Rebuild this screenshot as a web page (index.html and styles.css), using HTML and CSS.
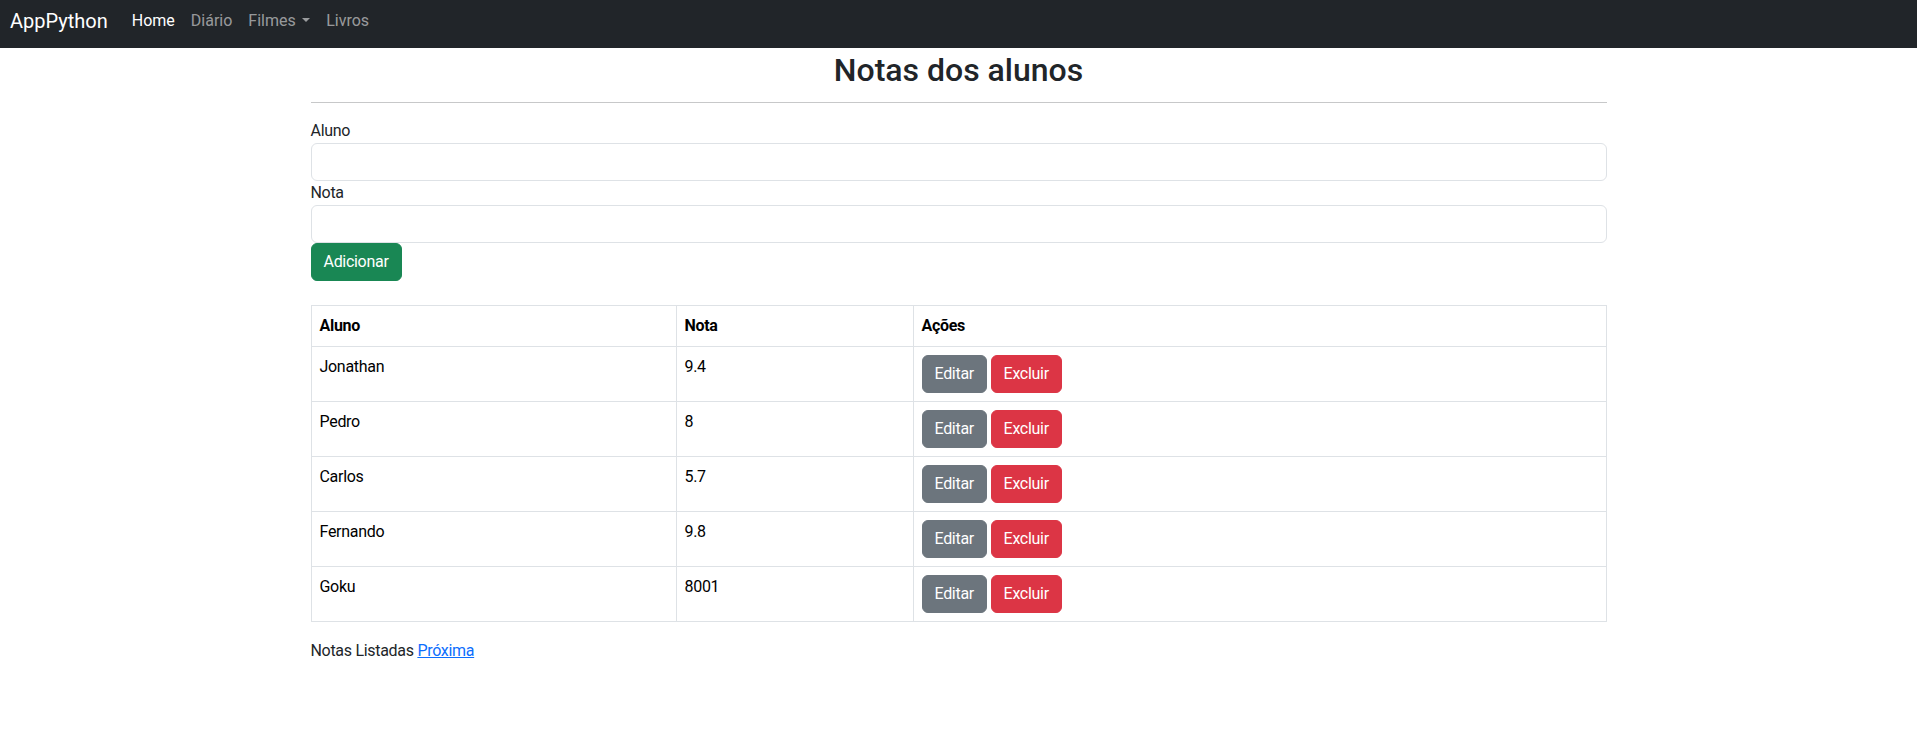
FILE: index.html
```html
<!DOCTYPE html>
<html lang="pt-BR">
<head>
<meta charset="utf-8">
<title>AppPython</title>
<link rel="stylesheet" href="styles.css">
</head>
<body>
<nav class="navbar">
  <a class="brand" href="#">AppPython</a>
  <ul class="nav">
    <li><a class="nav-link active" href="#">Home</a></li>
    <li><a class="nav-link" href="#">Diário</a></li>
    <li><a class="nav-link dropdown" href="#">Filmes</a></li>
    <li><a class="nav-link" href="#">Livros</a></li>
  </ul>
</nav>
<main class="container">
  <h1 class="title">Notas dos alunos</h1>
  <hr class="divider">
  <form class="form">
    <label class="label" for="aluno">Aluno</label>
    <input class="input" id="aluno" type="text">
    <label class="label" for="nota">Nota</label>
    <input class="input" id="nota" type="text">
    <div><button class="btn btn-success" type="button">Adicionar</button></div>
  </form>
  <table class="table">
    <colgroup>
      <col class="col-aluno">
      <col class="col-nota">
      <col>
    </colgroup>
    <thead>
      <tr><th>Aluno</th><th>Nota</th><th>Ações</th></tr>
    </thead>
    <tbody>
      <tr><td>Jonathan</td><td>9.4</td><td><button class="btn btn-secondary" type="button">Editar</button> <button class="btn btn-danger" type="button">Excluir</button></td></tr>
      <tr><td>Pedro</td><td>8</td><td><button class="btn btn-secondary" type="button">Editar</button> <button class="btn btn-danger" type="button">Excluir</button></td></tr>
      <tr><td>Carlos</td><td>5.7</td><td><button class="btn btn-secondary" type="button">Editar</button> <button class="btn btn-danger" type="button">Excluir</button></td></tr>
      <tr><td>Fernando</td><td>9.8</td><td><button class="btn btn-secondary" type="button">Editar</button> <button class="btn btn-danger" type="button">Excluir</button></td></tr>
      <tr><td>Goku</td><td>8001</td><td><button class="btn btn-secondary" type="button">Editar</button> <button class="btn btn-danger" type="button">Excluir</button></td></tr>
    </tbody>
  </table>
  <p class="pager">Notas Listadas <a class="link" href="#">Próxima</a></p>
</main>
</body>
</html>
```
FILE: styles.css
```css
* { box-sizing: border-box; }

body {
  margin: 0;
  font-family: Roboto, "Segoe UI", "Helvetica Neue", Arial, sans-serif;
  font-size: 16px;
  line-height: 24px;
  color: #212529;
  background: #fff;
}

.navbar {
  height: 48px;
  background: #212529;
  display: flex;
  align-items: center;
  padding: 1px 10px 7px;
}

.brand {
  font-size: 20px;
  line-height: 30px;
  padding: 5px 0;
  margin-right: 16px;
  color: #fff;
  text-decoration: none;
}

.nav {
  list-style: none;
  margin: 0;
  padding: 0;
  display: flex;
}

.nav-link {
  display: block;
  padding: 8px 8px;
  color: rgba(255, 255, 255, 0.55);
  text-decoration: none;
}

.nav-link.active { color: #fff; }

.dropdown::after {
  content: "";
  display: inline-block;
  margin-left: 0.4em;
  vertical-align: 0.255em;
  border-top: 0.3em solid;
  border-right: 0.3em solid transparent;
  border-left: 0.3em solid transparent;
  border-bottom: 0;
}

.container {
  max-width: 1296px;
  margin: 0 auto;
  letter-spacing: -0.3px;
}

.title {
  margin: 0;
  font-size: 32px;
  line-height: 44px;
  font-weight: 500;
  letter-spacing: 0;
  text-align: center;
  color: #212529;
}

.divider {
  margin: 10px 0 16px;
  border: 0;
  border-top: 1px solid #212529;
  opacity: 0.25;
}

.form {
  display: flex;
  flex-direction: column;
}

.label {
  display: block;
  line-height: 24px;
}

.input {
  display: block;
  width: 100%;
  height: 38px;
  padding: 6px 12px;
  font: inherit;
  color: #212529;
  background: #fff;
  border: 1px solid #dee2e6;
  border-radius: 6px;
}

.btn {
  display: inline-block;
  font: inherit;
  font-size: 16px;
  line-height: 24px;
  letter-spacing: -0.3px;
  padding: 6px 12px;
  border: 1px solid transparent;
  border-radius: 6px;
  color: #fff;
  cursor: pointer;
  vertical-align: middle;
}

.btn-success { background: #198754; border-color: #198754; }
.btn-secondary { background: #6c757d; border-color: #6c757d; }
.btn-danger { background: #dc3545; border-color: #dc3545; }

.table {
  width: 100%;
  margin: 24px 0 17px;
  border-collapse: collapse;
  table-layout: fixed;
  color: #000;
}

.col-aluno { width: 365px; }
.col-nota { width: 237px; }

.table th,
.table td {
  border: 1px solid #dee2e6;
  padding: 8px;
  text-align: left;
  vertical-align: top;
}

.table th { font-weight: 700; }

.pager {
  margin: 0 0 16px;
}

.link {
  color: #0d6efd;
  text-decoration: underline;
}
```
